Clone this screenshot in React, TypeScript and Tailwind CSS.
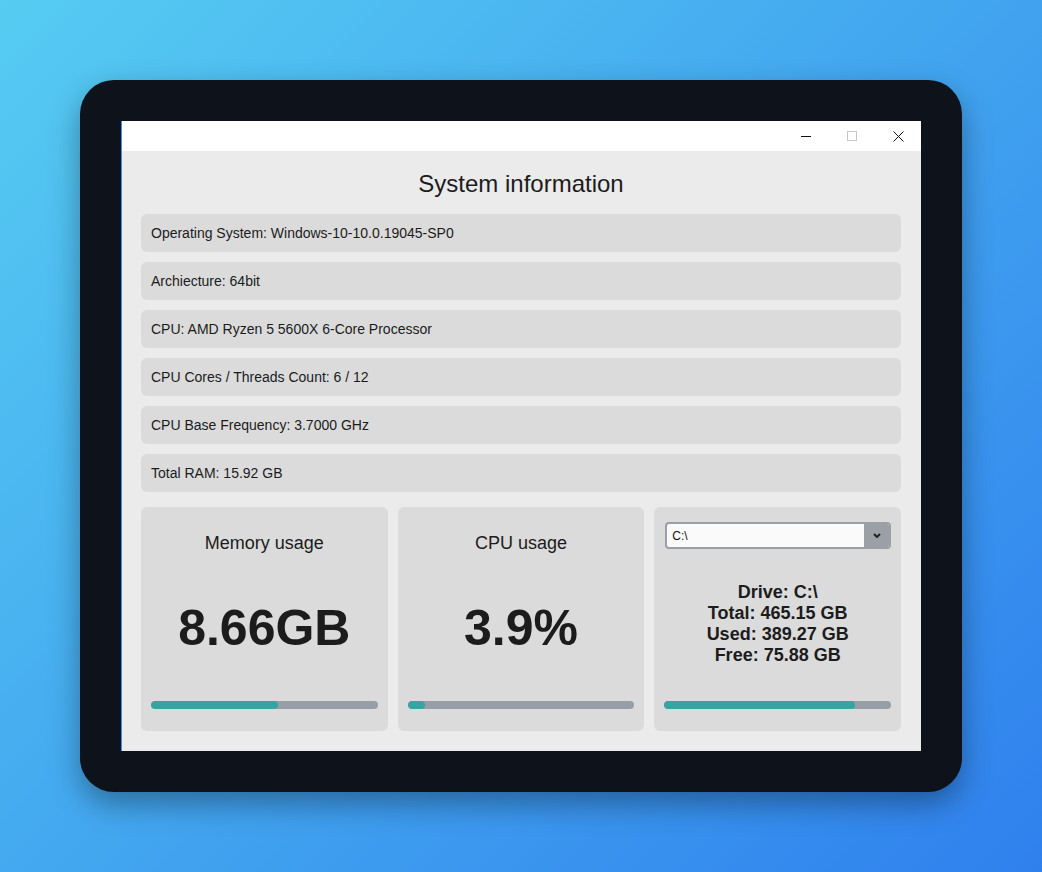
import React from 'react';

const INFO_ROWS = [
  'Operating System: Windows-10-10.0.19045-SP0',
  'Archiecture: 64bit',
  'CPU: AMD Ryzen 5 5600X 6-Core Processor',
  'CPU Cores / Threads Count: 6 / 12',
  'CPU Base Frequency: 3.7000 GHz',
  'Total RAM: 15.92 GB',
];

function ProgressBar({ value }: { value: number }) {
  return (
    <div className="h-[8px] w-full rounded-full bg-[#979ea5] overflow-hidden">
      <div className="h-full rounded-full bg-[#37a3a3]" style={{ width: `${value}%` }} />
    </div>
  );
}

function UsageCard({ title, value, percent }: { title: string; value: string; percent: number }) {
  return (
    <div className="flex flex-col h-[224px] rounded-[6px] bg-[#dbdbdb] px-[10px]">
      <div className="mt-[26px] h-[21px] text-center text-[18px] leading-[21px] text-[#1c1c1c]">{title}</div>
      <div className="mt-[45px] h-[58px] text-center text-[50px] leading-[58px] font-bold text-[#1c1c1c]">
        {value}
      </div>
      <div className="mt-[44px]">
        <ProgressBar value={percent} />
      </div>
    </div>
  );
}

function TitleBar() {
  return (
    <div className="flex h-[30px] justify-end bg-white">
      <div className="flex w-[46px] items-center justify-center">
        <div className="h-[1px] w-[10px] bg-[#111]" />
      </div>
      <div className="flex w-[46px] items-center justify-center">
        <div className="h-[10px] w-[10px] border border-[#c8c8c8]" />
      </div>
      <div className="flex w-[46px] items-center justify-center">
        <svg width="11" height="11" viewBox="0 0 11 11">
          <path d="M0.5 0.5 L10.5 10.5 M10.5 0.5 L0.5 10.5" stroke="#111" strokeWidth="1" />
        </svg>
      </div>
    </div>
  );
}

export default function App() {
  return (
    <div
      className="w-[1042px] h-[872px] p-[80px] bg-[linear-gradient(135deg,#56ccf2,#2f80ed)]"
      style={{ fontFamily: '"Liberation Sans", Arial, sans-serif' }}
    >
      <div className="w-[882px] h-[712px] rounded-[34px] bg-[#0e121a] p-[41px] shadow-[0_12px_30px_rgba(0,0,0,0.35)]">
        <div className="relative w-[800px] h-[630px] bg-[#ebebeb]">
          <TitleBar />
          <div className="px-[20px]">
            <h1 className="pt-[18px] h-[48px] text-center text-[24px] leading-[30px] text-[#1c1c1c]">
              System information
            </h1>
            <div className="mt-[15px] flex flex-col gap-[10px]">
              {INFO_ROWS.map((row) => (
                <div
                  key={row}
                  className="flex h-[38px] items-center rounded-[6px] bg-[#dbdbdb] px-[10px] text-[14px] text-[#1c1c1c]"
                >
                  {row}
                </div>
              ))}
            </div>

            <div className="mt-[15px] grid grid-cols-3 gap-[10px]">
              <UsageCard title="Memory usage" value="8.66GB" percent={56} />
              <UsageCard title="CPU usage" value="3.9%" percent={7.5} />

              <div className="flex flex-col h-[224px] rounded-[6px] bg-[#dbdbdb] px-[10px]">
                <div className="mt-[15px] ml-[1px] flex h-[27px] overflow-hidden rounded-[4px] border-2 border-[#9aa0a6] bg-[#fafafa]">
                  <div className="flex flex-1 items-center pl-[5px] text-[12px] text-[#111]">C:\</div>
                  <div className="flex w-[25px] items-center justify-center bg-[#9aa0a6]">
                    <svg width="8" height="5" viewBox="0 0 8 5">
                      <path d="M1 1 L4 4 L7 1" fill="none" stroke="#222" strokeWidth="2" />
                    </svg>
                  </div>
                </div>
                <div className="mt-[33px] text-center text-[18px] leading-[21px] font-bold text-[#1c1c1c]">
                  <div>Drive: C:\</div>
                  <div>Total: 465.15 GB</div>
                  <div>Used: 389.27 GB</div>
                  <div>Free: 75.88 GB</div>
                </div>
                <div className="mt-[35px]">
                  <ProgressBar value={84} />
                </div>
              </div>
            </div>
          </div>
          {/* window accent edge */}
          <div className="absolute left-0 top-0 h-full w-[1px] bg-[#3d8fe6]" />
        </div>
      </div>
    </div>
  );
}
